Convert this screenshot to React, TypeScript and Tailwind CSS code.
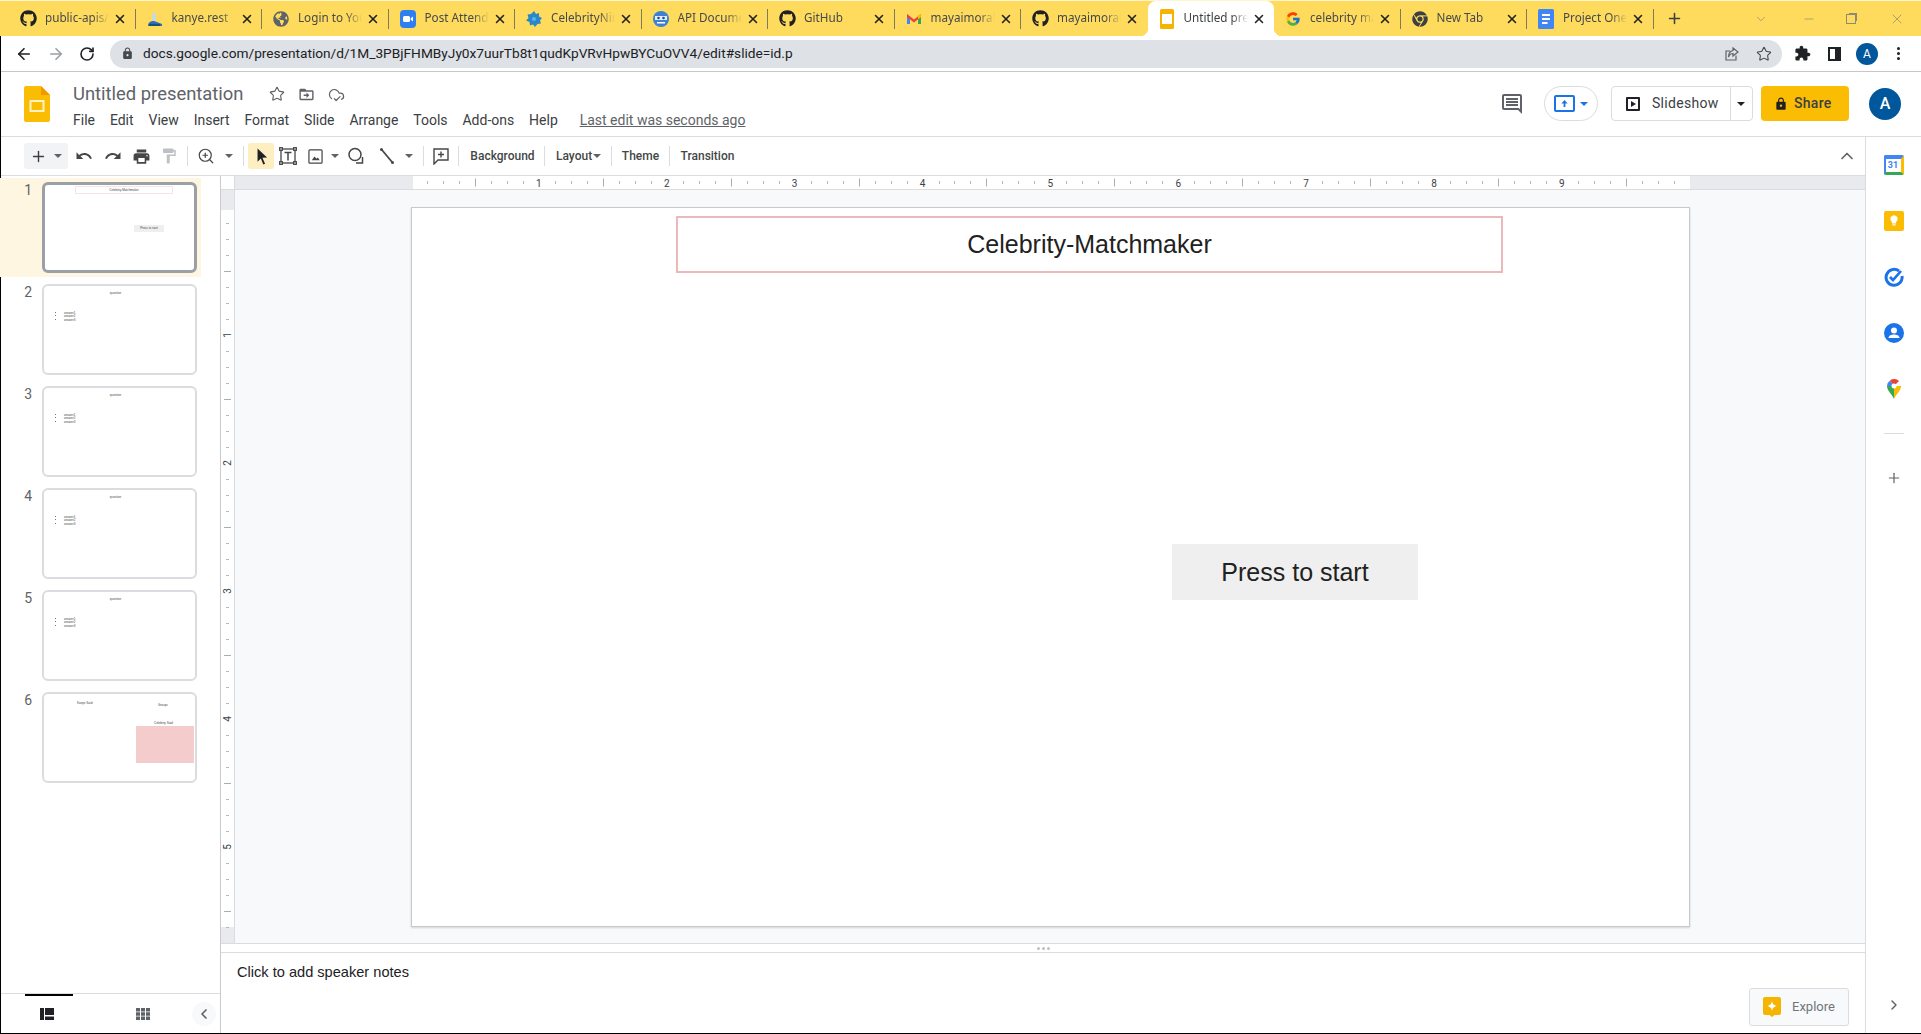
import React from "react";
import { FaGithub, FaChrome, FaGlobeAmericas } from "react-icons/fa";
import { FcGoogle } from "react-icons/fc";
import { ArrowLeft, ArrowRight, RotateCw, Star, X, Plus, ZoomIn, ChevronUp, ChevronLeft, ChevronRight, ChevronDown, Minus, CloudCheck } from "lucide-react";

const M = ({ d, s = 24, c = "fill-[#444746]" }: { d: string; s?: number; c?: string }) => (
  <svg viewBox="0 0 24 24" width={s} height={s} className={c}><path d={d} /></svg>
);

const LOCK = "M18 8h-1V6c0-2.76-2.24-5-5-5S7 3.24 7 6v2H6c-1.1 0-2 .9-2 2v10c0 1.1.9 2 2 2h12c1.1 0 2-.9 2-2V10c0-1.1-.9-2-2-2zm-6 9c-1.1 0-2-.9-2-2s.9-2 2-2 2 .9 2 2-.9 2-2 2zm3.1-9H8.9V6c0-1.71 1.39-3.1 3.1-3.1 1.71 0 3.1 1.39 3.1 3.1v2z";
const EXT = "M20.5 11H19V7c0-1.1-.9-2-2-2h-4V3.5C13 2.12 11.88 1 10.5 1S8 2.12 8 3.5V5H4c-1.1 0-1.99.9-1.99 2v3.8H3.5c1.49 0 2.7 1.21 2.7 2.7s-1.21 2.7-2.7 2.7H2V20c0 1.1.9 2 2 2h3.8v-1.5c0-1.49 1.21-2.7 2.7-2.7 1.49 0 2.7 1.21 2.7 2.7V22H17c1.1 0 2-.9 2-2v-4h1.5c1.38 0 2.5-1.12 2.5-2.5S21.88 11 20.5 11z";

const Caret = ({ c = "border-t-[#5f6368]" }: { c?: string }) => (
  <span className={`w-0 h-0 border-l-[4px] border-r-[4px] border-t-[4px] border-l-transparent border-r-transparent ${c}`} />
);

const Zoomfav = () => (
  <svg viewBox="0 0 16 18" width={16} height={18}>
    <rect width="16" height="18" rx="4" fill="#2d7ff0" />
    <rect x="3" y="6" width="7" height="6" rx="1.5" fill="#fff" />
    <path d="M10.7 8.300 13 6.600v4.800l-2.300-1.700z" fill="#fff" />
  </svg>
);
const Kanye = () => (
  <svg viewBox="0 0 16 16" width={16} height={16}>
    <path d="M1 15c0-4 3-5 6-5l8 3v2z" fill="#2d6ea8" />
    <path d="M5 10V4c0-2 4-3 4 0v6z" fill="#c9d8e4" />
    <path d="M2 13h11v2H2z" fill="#15517f" />
  </svg>
);
const Ninja = () => (
  <svg viewBox="0 0 16 16" width={16} height={16}>
    <path d="M8 0l2 3 3-1 0 3.5 3 1.5-2 2.5 1 3-3.500.5L9 16l-2-2.500-3 1-.5-3.500L0 9.500 2.500 7 1.500 3.500 5 3z" fill="#2b88c8" />
    <circle cx="8" cy="8" r="2" fill="#57b6e8" />
  </svg>
);
const ApiBot = () => (
  <svg viewBox="0 0 16 16" width={16} height={16}>
    <circle cx="8" cy="8" r="8" fill="#3b82d6" />
    <rect x="2" y="5" width="12" height="4" fill="#e5eefb" />
    <circle cx="5.500" cy="7" r="1.300" fill="#1f4f8f" />
    <circle cx="10.500" cy="7" r="1.300" fill="#1f4f8f" />
    <path d="M4 11h8v1.500H4z" fill="#fff" />
  </svg>
);
const Gmail = () => (
  <svg viewBox="0 0 16 16" width={16} height={16}>
    <path d="M1 3v10h3V7z" fill="#4285f4" />
    <path d="M15 3v10h-3V7z" fill="#34a853" />
    <path d="M1 3l7 5.500L15 3v3L8 11.500 1 6z" fill="#ea4335" />
    <path d="M12 4.500 15 3v3l-3 2.500z" fill="#fbbc04" />
  </svg>
);
const SlidesFav = () => (
  <svg viewBox="0 0 16 20" width={16} height={20}>
    <rect x="1" y="0" width="14" height="20" rx="1.500" fill="#f4b400" />
    <rect x="3" y="5" width="10" height="10" fill="#fff" />
  </svg>
);
const DocsFav = () => (
  <svg viewBox="0 0 16 20" width={16} height={20}>
    <rect x="0" y="0" width="16" height="20" rx="1.500" fill="#4285f4" />
    <path d="M4 5h8v2H4zM4 9h8v2H4zM4 13h5.500v2H4z" fill="#fff" />
  </svg>
);

const tabs: { t: string; i: React.ReactNode; a?: boolean }[] = [
  { t: "public-apis/", i: <FaGithub size={17} className="text-[#202124]" /> },
  { t: "kanye.rest", i: <Kanye /> },
  { t: "Login to Your", i: <FaGlobeAmericas size={16} className="text-[#5f6368]" /> },
  { t: "Post Attendee", i: <Zoomfav /> },
  { t: "CelebrityNinja", i: <Ninja /> },
  { t: "API Document", i: <ApiBot /> },
  { t: "GitHub", i: <FaGithub size={17} className="text-[#202124]" /> },
  { t: "mayaimorales", i: <Gmail /> },
  { t: "mayaimorales", i: <FaGithub size={17} className="text-[#202124]" /> },
  { t: "Untitled prese", i: <SlidesFav />, a: true },
  { t: "celebrity mat", i: <FcGoogle size={16} /> },
  { t: "New Tab", i: <FaChrome size={16} className="text-[#3c4043]" /> },
  { t: "Project One", i: <DocsFav /> },
];

const Tab = ({ t, i, a, sep }: { t: string; i: React.ReactNode; a?: boolean; sep: boolean }) => (
  <div className={`relative w-[126.500px] shrink-0 h-full flex items-center ${a ? "bg-white rounded-t-lg" : ""}`}>
    {a && <span className="absolute -left-2 bottom-0 w-2 h-2 bg-[radial-gradient(circle_at_0_0,#fedb5c_8px,#fff_8.500px)]" />}
    {a && <span className="absolute -right-2 bottom-0 w-2 h-2 bg-[radial-gradient(circle_at_100%_0,#fedb5c_8px,#fff_8.500px)]" />}
    <span className="w-[36px] pl-[11px] shrink-0 flex items-center">{i}</span>
    <span className={`w-[64px] shrink-0 overflow-hidden whitespace-nowrap text-[11.700px] pb-[2px] [mask-image:linear-gradient(90deg,#000_75%,transparent)] ${a ? "text-[#3c4043]" : "text-[#45494d]"}`}>{t}</span>
    <X size={14} strokeWidth={2.700} className="ml-[4px] text-[#202124]" />
    {sep && <span className="absolute right-0 top-[8px] h-[20px] w-px bg-[#7f7a5c]" />}
  </div>
);

const AddressBar = () => (
  <div className="h-[36px] shrink-0 flex items-center border-b border-[#c7c7c7] bg-white">
    <div className="w-[109px] pl-[14px] flex items-center gap-[14px] shrink-0">
      <ArrowLeft size={18} strokeWidth={2.200} className="text-[#202124]" />
      <ArrowRight size={18} strokeWidth={2.200} className="text-[#9aa0a6]" />
      <RotateCw size={16} strokeWidth={2.400} className="text-[#202124]" />
    </div>
    <div className="w-[1672px] h-[28px] rounded-full bg-[#dee1e6] flex items-center pl-[11px] pr-[10px] shrink-0">
      <M d={LOCK} s={13} c="fill-[#45494d]" />
      <span className="ml-[9px] text-[13.700px] text-[#202124]">docs.google.com/presentation/d/1M_3PBjFHMByJy0x7uurTb8t1qudKpVRvHpwBYCuOVV4/edit#slide=id.p</span>
      <svg viewBox="0 0 16 16" width={16} height={16} fill="none" stroke="#5f6368" strokeWidth="1.200" className="ml-auto mr-[16px]">
        <path d="M12 9.500V14H2V5h4M9 2l5 4-5 4V7.500C7 7.500 5.500 8.500 4.500 11c0-4 2-6 4.500-6.500z" />
      </svg>
      <Star size={16} strokeWidth={1.600} className="text-[#45494d]" />
    </div>
    <div className="flex items-center ml-[12px] gap-[14px]">
      <M d={EXT} s={17} c="fill-[#202124]" />
      <span className="w-[13px] h-[14px] border-[2.500px] border-[#202124] border-r-[6px] ml-[3px]" />
      <span className="w-[22px] h-[22px] rounded-full bg-[#01579b] text-white text-[12px] flex items-center justify-center ml-[1px]">A</span>
      <span className="flex flex-col gap-[2px] ml-[5px]">
        <i className="w-[3px] h-[3px] rounded-full bg-[#202124]" />
        <i className="w-[3px] h-[3px] rounded-full bg-[#202124]" />
        <i className="w-[3px] h-[3px] rounded-full bg-[#202124]" />
      </span>
    </div>
  </div>
);

const menu = ["File", "Edit", "View", "Insert", "Format", "Slide", "Arrange", "Tools", "Add-ons", "Help"];

const Header = () => (
  <div className="h-[65px] shrink-0 flex items-start border-b border-[#dadce0] pl-[23px]">
    <svg viewBox="0 0 26 36" width={26} height={36} className="mt-[14px] shrink-0">
      <path d="M2 0h15l9 9v25a2 2 0 0 1-2 2H2a2 2 0 0 1-2-2V2a2 2 0 0 1 2-2z" fill="#fbbc04" />
      <path d="M17 0l9 9h-9z" fill="#f09a00" />
      <rect x="6.500" y="15" width="13" height="10" fill="none" stroke="#fff3c4" strokeWidth="2" />
    </svg>
    <div className="ml-[23px] shrink-0">
      <div className="flex items-center mt-[10px] h-[24px]">
        <span className="text-[18.400px] text-[#5f6368] leading-none">Untitled presentation</span>
        <Star size={16} strokeWidth={1.700} className="ml-[26px] text-[#5f6368]" />
        <M d="M20 6h-8l-2-2H4c-1.100 0-2 .9-2 2v12c0 1.100.9 2 2 2h16c1.100 0 2-.9 2-2V8c0-1.100-.9-2-2-2zm0 12H4V8h16v10zm-8-1l4-4-4-4v3H8v2h4v3z" s={17} c="ml-[13px] fill-[#5f6368]" />
        <CloudCheck size={17} strokeWidth={1.700} className="ml-[13px] text-[#5f6368]" />
      </div>
      <div className="flex items-center mt-[4px] h-[20px] text-[14px] text-[#3c4043]">
        {menu.map((m) => (<span key={m} className="mr-[14.900px]">{m}</span>))}
        <span className="ml-[7px] text-[#5f6368] underline">Last edit was seconds ago</span>
      </div>
    </div>
    <div className="ml-auto flex items-center mt-[14px] h-[35px] pr-[20px]">
      <M d="M21.990 4c0-1.100-.89-2-1.990-2H4c-1.100 0-2 .9-2 2v12c0 1.100.9 2 2 2h14l4 4-.01-18zM20 4v13.170L18.830 16H4V4h16zM6 12h12v2H6zm0-3h12v2H6zm0-3h12v2H6z" s={24} c="fill-[#5f6368]" />
      <div className="ml-[20px] w-[54px] h-[35px] rounded-full border border-[#dadce0] flex items-center justify-center gap-[5px]">
        <span className="w-[21px] h-[17px] border-2 border-[#1a73e8] rounded-[2px] flex items-center justify-center">
          <svg viewBox="0 0 10 10" width={9} height={9}><path d="M5 1 1.500 5H4v4h2V5h2.500z" fill="#1a73e8" /></svg>
        </span>
        <Caret c="border-t-[#1a73e8]" />
      </div>
      <div className="ml-[13px] w-[142px] h-[35px] rounded-[4px] border border-[#dadce0] flex items-center">
        <span className="ml-[14px] w-[14px] h-[14px] border-2 border-[#202124] rounded-[1px] flex items-center justify-center">
          <span className="w-0 h-0 border-l-[5px] border-l-[#202124] border-y-[3.500px] border-y-transparent" />
        </span>
        <span className="ml-[12px] w-[78px] text-[14px] tracking-[0.300px] text-[#3c4043]">Slideshow</span>
        <span className="w-[21px] h-full border-l border-[#dadce0] flex items-center justify-center"><Caret c="border-t-[#202124]" /></span>
      </div>
      <div className="ml-[8px] w-[88px] h-[35px] rounded-[4px] bg-[#fbbc04] flex items-center pl-[13px] gap-[6px] text-[14px] font-medium text-[#3c4043]">
        <M d={LOCK} s={14} c="fill-[#202124]" />
        <span className="tracking-[0.300px]">Share</span>
      </div>
      <span className="ml-[20px] w-[32px] h-[32px] rounded-full bg-[#01579b] text-white text-[16px] font-medium flex items-center justify-center">A</span>
    </div>
  </div>
);

const Cell = ({ w, children, cls = "" }: { w: string; children?: React.ReactNode; cls?: string }) => (
  <div className={`${w} h-[26px] flex items-center justify-center shrink-0 ${cls}`}>{children}</div>
);
const Sep = ({ m }: { m: string }) => <span className={`w-px h-[20px] bg-[#dadce0] shrink-0 ${m}`} />;

const I = "fill-[#444746]";
const Toolbar = () => (
  <div className="h-[39px] shrink-0 flex items-center border-b border-[#dadce0] pl-[23px] text-[12px] text-[#444746] font-medium">
    <Cell w="w-[44px]" cls="bg-[#f1f3f4] rounded-[3px] gap-[7px] pr-[1px]">
      <Plus size={17} strokeWidth={2} className="text-[#3c4043]" />
      <Caret />
    </Cell>
    <Cell w="w-[28px] ml-[2px]"><M d="M12.500 8c-2.650 0-5.050.99-6.900 2.600L2 7v9h9l-3.620-3.620c1.390-1.160 3.160-1.880 5.120-1.880 3.540 0 6.550 2.310 7.600 5.500l2.370-.78C21.080 11.030 17.150 8 12.500 8z" s={18} c={I} /></Cell>
    <Cell w="w-[29px]"><M d="M18.400 10.600C16.550 8.990 14.150 8 11.500 8c-4.650 0-8.580 3.030-9.960 7.220L3.900 16c1.050-3.190 4.050-5.500 7.600-5.500 1.950 0 3.730.72 5.120 1.880L13 16h9V7l-3.600 3.600z" s={18} c={I} /></Cell>
    <Cell w="w-[28px]"><M d="M19 8H5c-1.660 0-3 1.340-3 3v6h4v4h12v-4h4v-6c0-1.660-1.340-3-3-3zm-3 11H8v-5h8v5zm3-7c-.55 0-1-.45-1-1s.45-1 1-1 1 .45 1 1-.45 1-1 1zm-1-9H6v4h12V3z" s={19} c={I} /></Cell>
    <Cell w="w-[28px]"><M d="M18 4V3c0-.55-.45-1-1-1H5c-.55 0-1 .45-1 1v4c0 .55.45 1 1 1h12c.55 0 1-.45 1-1V6h1v4H9v11c0 .55.45 1 1 1h2c.55 0 1-.45 1-1v-9h8V4h-3z" s={18} c="fill-[#bdc1c6]" /></Cell>
    <Sep m="ml-[4px] mr-[4px]" />
    <Cell w="w-[28px]"><ZoomIn size={18} strokeWidth={1.600} className="text-[#444746]" /></Cell>
    <Cell w="w-[18px]"><Caret /></Cell>
    <Sep m="ml-[5px] mr-[4px]" />
    <Cell w="w-[26px]" cls="bg-[#feefc3] rounded-[2px]"><M d="M7 2l12 11.200-5.800.5 3.300 7.300-2.200 1-3.200-7.400L7 18.500V2z" s={19} c="fill-[#202124]" /></Cell>
    <Cell w="w-[28px]">
      <svg viewBox="0 0 18 18" width={18} height={18} fill="none" stroke="#444746" strokeWidth="1.300">
        <rect x="2" y="2" width="14" height="14" />
        <path d="M5.500 5.500h7M9 5.500v8" strokeWidth="1.500" />
        <rect x="0.700" y="0.700" width="2.600" height="2.600" fill="#fff" /><rect x="14.700" y="0.700" width="2.600" height="2.600" fill="#fff" /><rect x="0.700" y="14.700" width="2.600" height="2.600" fill="#fff" /><rect x="14.700" y="14.700" width="2.600" height="2.600" fill="#fff" />
      </svg>
    </Cell>
    <Cell w="w-[26px]">
      <svg viewBox="0 0 16 16" width={15} height={15} fill="none" stroke="#444746" strokeWidth="1.300">
        <rect x="1" y="1" width="14" height="14" rx="1" />
        <path d="M4 12l3-4 2 2.500 1.500-1.500 2 3z" fill="#444746" stroke="none" />
      </svg>
    </Cell>
    <Cell w="w-[14px]"><Caret /></Cell>
    <Cell w="w-[28px]">
      <svg viewBox="0 0 18 18" width={18} height={18} fill="none" stroke="#444746" strokeWidth="1.500">
        <circle cx="8" cy="7.500" r="6" />
        <path d="M9 16h6.500v-6" />
      </svg>
    </Cell>
    <Cell w="w-[30px] ml-[2px]">
      <svg viewBox="0 0 18 18" width={18} height={18} fill="none" stroke="#444746" strokeWidth="1.800">
        <path d="M4 3l10 12" />
        <circle cx="3.500" cy="2.500" r="1.500" fill="#444746" stroke="none" />
        <circle cx="14.500" cy="15.500" r="1.500" fill="#444746" stroke="none" />
      </svg>
    </Cell>
    <Cell w="w-[14px]"><Caret /></Cell>
    <Sep m="ml-[7px] mr-[3px]" />
    <Cell w="w-[28px]">
      <svg viewBox="0 0 18 18" width={18} height={18} fill="none" stroke="#444746" strokeWidth="1.400">
        <path d="M2 2h14v11H6l-4 4z" />
        <path d="M9 4.500v6M6 7.500h6" />
      </svg>
    </Cell>
    <Sep m="ml-[3px] mr-[11px]" />
    <span className="w-[65px] text-center">Background</span>
    <Sep m="ml-[9px] mr-[11px]" />
    <span className="flex items-center gap-[1px] w-[46px]">Layout<Caret /></span>
    <Sep m="ml-[9px] mr-[9px]" />
    <span className="w-[39px] text-center">Theme</span>
    <Sep m="ml-[9px] mr-[10px]" />
    <span className="w-[55px] text-center">Transition</span>
    <ChevronUp size={20} strokeWidth={2} className="ml-auto mr-[8px] text-[#5f6368]" />
  </div>
);

const Thumb = ({ n, active, children }: { n: number; active?: boolean; children: React.ReactNode }) => (
  <div className={`h-[99px] mb-[3px] w-[201px] flex items-center ${active ? "bg-[#fef6e0]" : ""}`}>
    <span className="w-[42px] text-right text-[14px] leading-[16px] text-[#5f6368] self-start pt-[4px] pr-[10px]">{n}</span>
    <div className={`relative w-[155px] h-[91px] rounded-[6px] bg-white overflow-hidden font-['Liberation_Sans',sans-serif] text-[#444] text-[3px] ${active ? "border-[3px] border-[#9aa0a6]" : "border-2 border-[#dadce0]"}`}>
      {children}
    </div>
  </div>
);

const Q = () => (
  <>
    <div className="absolute left-0 top-[5px] w-[143px] text-center">question</div>
    <ul className="absolute left-[16px] top-[26px] leading-[3.300px] list-disc pl-[4px]">
      <li>answer1</li><li>answer2</li><li>answer3</li>
    </ul>
  </>
);

const Sidebar = () => (
  <div className="w-[220px] shrink-0 border-r border-[#c9cbce] flex flex-col">
    <div className="flex-1 pt-[2px] -ml-[1px]">
      <Thumb n={1} active>
        <div className="absolute left-[30px] top-[1px] w-[98px] h-[8px] border border-[#f7e3e3] text-center leading-[6px]">Celebrity-Matchmaker</div>
        <div className="absolute left-[89px] top-[40px] w-[30px] h-[7px] bg-[#efefef] text-center leading-[7px]">Press to start</div>
      </Thumb>
      <Thumb n={2}><Q /></Thumb>
      <Thumb n={3}><Q /></Thumb>
      <Thumb n={4}><Q /></Thumb>
      <Thumb n={5}><Q /></Thumb>
      <Thumb n={6}>
        <div className="absolute left-[33px] top-[7px]">Kanye Said:</div>
        <div className="absolute left-[114px] top-[9px]">Groups</div>
        <div className="absolute left-[110px] top-[27px]">Celebrity Said:</div>
        <div className="absolute left-[92px] top-[32px] w-[58px] h-[37px] bg-[#f4cccc]" />
      </Thumb>
    </div>
    <div className="h-[40px] shrink-0 border-t border-[#dadce0] flex items-center relative">
      <span className="absolute left-[24px] top-0 w-[48px] h-[2px] bg-black" />
      <svg viewBox="0 0 14 12" width={14} height={12} className="ml-[39px]"><path d="M0 0h4v12H0zM5 0h9v7H5zM5 8.500h9V12H5z" fill="#202124" /></svg>
      <svg viewBox="0 0 14 12" width={14} height={12} className="ml-[82px]"><path d="M0 0h4v3.500H0zM5 0h4v3.500H5zM10 0h4v3.500h-4zM0 4.250h4v3.500H0zM5 4.250h4v3.500H5zM10 4.250h4v3.500h-4zM0 8.500h4V12H0zM5 8.500h4V12H5zM10 8.500h4V12h-4z" fill="#5f6368" /></svg>
      <span className="ml-[42px] w-[24px] h-[24px] rounded-full bg-[#f8f9fa] flex items-center justify-center"><ChevronLeft size={16} strokeWidth={2.500} className="text-[#5f6368]" /></span>
    </div>
  </div>
);

const rng = (n: number) => Array.from({ length: n }, (_, i) => i);

const HRuler = () => (
  <svg width={1644} height={14} className="block shrink-0">
    <rect width="1644" height="14" fill="#fff" />
    <rect x="14" width="178" height="13" fill="#e8eaed" />
    <rect x="1469" width="175" height="13" fill="#e8eaed" />
    <rect y="13" width="1644" height="1" fill="#dadce0" />
    <rect x="13" width="1" height="14" fill="#dadce0" />
    {rng(79).map((i) => {
      const p = i + 1;
      const xx = 190 + p * 15.985;
      if (p % 8 === 0) {
        return <text key={i} x={xx} y={10.500} textAnchor="middle" fontSize="10" fill="#3c4043" fontFamily="Roboto, sans-serif">{p / 8}</text>;
      }
      return <rect key={i} x={Math.round(xx)} y={p % 4 === 0 ? 2.500 : 5} width="1" height={p % 4 === 0 ? 8 : 3} fill={p % 4 === 0 ? "#a9adb2" : "#b4b8bc"} />;
    })}
  </svg>
);

const VRuler = () => (
  <svg width={14} height={753} className="block shrink-0">
    <rect width="14" height="753" fill="#fff" />
    <rect width="13" height="20" fill="#e8eaed" />
    <rect y="737" width="13" height="16" fill="#e8eaed" />
    <rect x="13" width="1" height="753" fill="#dadce0" />
    {rng(45).map((i) => {
      const p = i + 1;
      const y = 17 + p * 16;
      if (p % 8 === 0) {
        return <text key={i} x={0} y={0} transform={`translate(10 ${y}) rotate(-90)`} textAnchor="middle" fontSize="10" fill="#3c4043" fontFamily="Roboto, sans-serif">{p / 8}</text>;
      }
      return <rect key={i} x={p % 4 === 0 ? 3 : 5} y={y} width={p % 4 === 0 ? 7 : 3} height="1" fill={p % 4 === 0 ? "#a9adb2" : "#b4b8bc"} />;
    })}
  </svg>
);

const Main = () => (
  <div className="flex-1 min-w-0 flex flex-col">
    <HRuler />
    <div className="h-[753px] shrink-0 flex">
      <VRuler />
      <div className="flex-1 bg-[#f8f9fa] pt-[17px] pl-[176px]">
        <div className="relative w-[1279px] h-[720px] bg-white border border-[#c8c9cb] shadow-[0_1px_2px_rgba(0,0,0,0.15)] font-['Liberation_Sans',sans-serif] text-[25px] text-[#212121]">
          <div className="absolute left-[264px] top-[8px] w-[827px] h-[57px] border-2 border-[#eab9bb] flex items-center justify-center">Celebrity-Matchmaker</div>
          <div className="absolute left-[760px] top-[336px] w-[246px] h-[56px] bg-[#efefef] flex items-center justify-center pt-[1px]">Press to start</div>
        </div>
      </div>
    </div>
    <div className="h-[10px] shrink-0 border-y border-[#dadce0] bg-white flex items-center justify-center gap-[2px]">
      <i className="w-[3px] h-[3px] rounded-full bg-[#bdc1c6]" />
      <i className="w-[3px] h-[3px] rounded-full bg-[#bdc1c6]" />
      <i className="w-[3px] h-[3px] rounded-full bg-[#bdc1c6]" />
    </div>
    <div className="flex-1 relative">
      <div className="pl-[16px] pt-[9px] text-[14.600px] leading-[20px] text-[#202124] font-['Liberation_Sans',sans-serif]">Click to add speaker notes</div>
      <div className="absolute right-[16px] bottom-[7px] w-[100px] h-[38px] rounded-[3px] bg-[#f8f9fa] border border-[#dadce0] flex items-center pl-[13px] gap-[11px] text-[13px] text-[#70757a]">
        <svg viewBox="0 0 18 20" width={18} height={20}>
          <path d="M2 0h14a2 2 0 0 1 2 2v14a2 2 0 0 1-2 2h-4.500L9 20l-2.500-2H2a2 2 0 0 1-2-2V2a2 2 0 0 1 2-2z" fill="#f4b400" />
          <path d="M9 4c.6 3 1.500 4.200 5 5-3.500.8-4.400 2-5 5-.6-3-1.500-4.200-5-5 3.500-.8 4.400-2 5-5z" fill="#fff" />
        </svg>
        Explore
      </div>
    </div>
  </div>
);

const Rail = () => (
  <div className="w-[56px] shrink-0 border-l border-[#dadce0] flex flex-col items-center">
    <div className="h-[56px] flex items-center justify-center">
      <div className="relative w-[20px] h-[20px] rounded-[2px] bg-white border-t-[4px] border-[#4285f4] border-l-[2px] border-b-[3px] border-b-[#34a853] border-r-[3px] border-r-[#fbbc04] flex items-center justify-center text-[9px] font-bold leading-none text-[#4285f4]">31</div>
    </div>
    <div className="h-[56px] flex items-center justify-center">
      <div className="w-[20px] h-[20px] rounded-[2px] bg-[#fbbc04] flex items-center justify-center">
        <svg viewBox="0 0 12 14" width={10} height={12}><path d="M6 0a4.500 4.500 0 0 0-2.500 8.200V10h5V8.200A4.500 4.500 0 0 0 6 0zM4 11h4v1.500H4z" fill="#fff" /></svg>
      </div>
    </div>
    <div className="h-[56px] flex items-center justify-center">
      <svg viewBox="0 0 20 20" width={20} height={20} fill="none">
        <path d="M15 4A8 8 0 1 0 18 9" stroke="#1a73e8" strokeWidth="3" />
        <path d="M6 10l3 3 8-9" stroke="#1a73e8" strokeWidth="2.600" />
      </svg>
    </div>
    <div className="h-[56px] flex items-center justify-center">
      <svg viewBox="0 0 20 20" width={20} height={20}>
        <circle cx="10" cy="10" r="10" fill="#1a73e8" />
        <circle cx="10" cy="7.500" r="3" fill="#fff" />
        <path d="M4.500 15c0-2.500 3-3.500 5.500-3.500s5.500 1 5.500 3.500z" fill="#fff" />
      </svg>
    </div>
    <div className="h-[56px] flex items-center justify-center">
      <svg viewBox="0 0 14 20" width={14} height={20}>
        <path d="M7 20C5 15 0 12 0 7h7z" fill="#34a853" />
        <path d="M7 20c2-5 7-8 7-13H7z" fill="#fbbc04" />
        <path d="M0 7a7 7 0 0 1 3-5.500L7 7z" fill="#4285f4" />
        <path d="M3 1.500A7 7 0 0 1 12 2L7 7z" fill="#ea4335" />
        <circle cx="7" cy="7" r="2.500" fill="#fff" />
      </svg>
    </div>
    <span className="mt-[16px] w-[20px] h-px bg-[#dadce0]" />
    <Plus size={16} strokeWidth={1.800} className="mt-[36px] text-[#5f6368]" />
    <ChevronRight size={16} strokeWidth={2.200} className="mt-auto mb-[20px] text-[#5f6368]" />
  </div>
);

export default function App() {
  return (
    <div className="w-[1921px] h-[1034px] overflow-hidden flex flex-col bg-white font-['Roboto',sans-serif]">
      <div className="h-[36px] shrink-0 bg-[#fedb5c] border-t border-[#fff5d0] flex pl-[9px] font-['Noto_Sans',sans-serif]">
        {tabs.map((t, i) => (
          <Tab key={i} t={t.t} i={t.i} a={t.a} sep={!t.a && i !== 8} />
        ))}
        <Plus size={17} strokeWidth={2.200} className="ml-[12px] mt-[9px] text-[#3c4043]" />
        <div className="ml-auto flex items-center text-[#8d8a78] pr-[16px]">
          <ChevronDown size={14} strokeWidth={1.200} className="mr-[34px]" />
          <Minus size={14} strokeWidth={1.200} className="mr-[30px]" />
          <span className="w-[10px] h-[10px] border border-[#8d8a78] shadow-[2px_-2px_0_-1px_#8d8a78] mr-[33px]" />
          <X size={16} strokeWidth={1.100} />
        </div>
      </div>
      <div className="flex-1 min-h-0 flex flex-col border-l border-b border-black">
        <AddressBar />
        <Header />
        <div className="flex-1 min-h-0 flex">
          <div className="flex-1 min-w-0 flex flex-col">
            <Toolbar />
            <div className="flex-1 min-h-0 flex">
              <Sidebar />
              <Main />
            </div>
          </div>
          <Rail />
        </div>
      </div>
    </div>
  );
}
